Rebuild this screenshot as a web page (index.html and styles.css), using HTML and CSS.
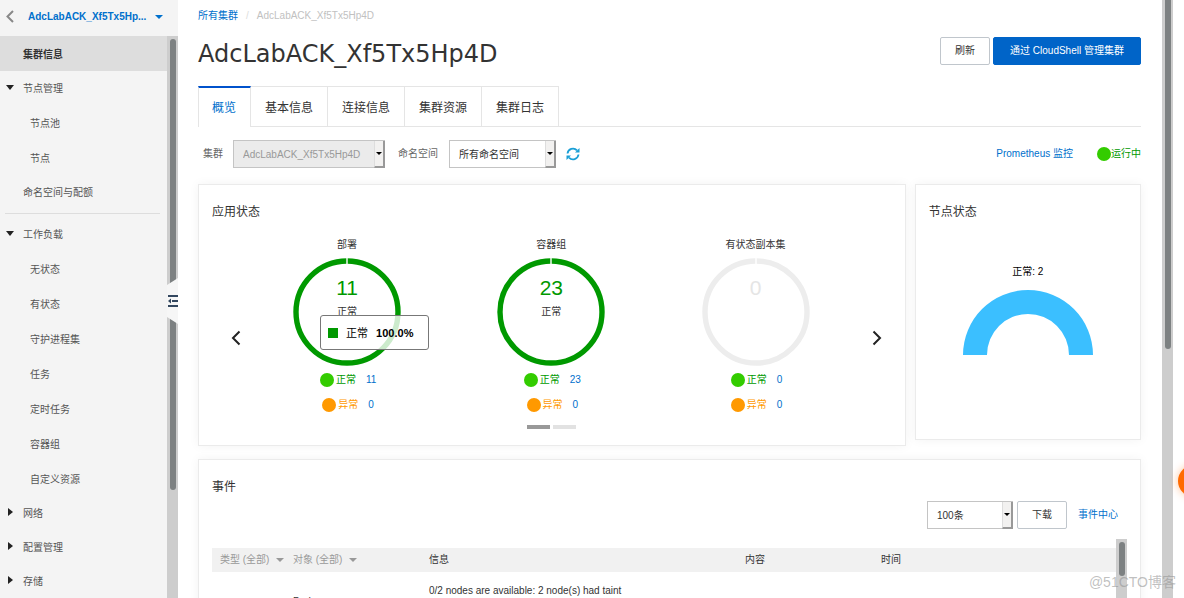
FILE: index.html
```html
<!DOCTYPE html>
<html lang="zh-CN">
<head>
<meta charset="utf-8">
<title>AdcLabACK_Xf5Tx5Hp4D</title>
<link rel="stylesheet" href="styles.css">
</head>
<body>
<div class="app">
  <aside class="sidebar">
    <div class="side-head">
      <button class="back" aria-label="返回"><svg width="8" height="13" viewBox="0 0 8 13"><path d="M7 1 1.500 6.500 7 12" fill="none" stroke="#888" stroke-width="2"/></svg></button>
      <button class="cluster-switch">AdcLabACK_Xf5Tx5Hp... <span class="caret"></span></button>
    </div>
    <div class="side-body">
      <nav class="menu">
        <a class="item active" href="#">集群信息</a>
        <a class="item" href="#"><span class="tri open"></span>节点管理</a>
        <a class="item child" href="#">节点池</a>
        <a class="item child" href="#">节点</a>
        <a class="item" href="#">命名空间与配额</a>
        <hr class="divider">
        <a class="item" href="#"><span class="tri open"></span>工作负载</a>
        <a class="item child" href="#">无状态</a>
        <a class="item child" href="#">有状态</a>
        <a class="item child" href="#">守护进程集</a>
        <a class="item child" href="#">任务</a>
        <a class="item child" href="#">定时任务</a>
        <a class="item child" href="#">容器组</a>
        <a class="item child" href="#">自定义资源</a>
        <a class="item" href="#"><span class="tri"></span>网络</a>
        <a class="item" href="#"><span class="tri"></span>配置管理</a>
        <a class="item" href="#"><span class="tri"></span>存储</a>
      </nav>
      <div class="track side-track"><div class="thumb side-thumb"></div></div>
    </div>
    <button class="collapse" aria-label="收起"><svg width="11" height="46" viewBox="0 0 11 46"><path d="M0 7 11 0V46L0 39Z" fill="#f6f6f6"/><path d="M1 18h10M5 23h6M1 28h10" stroke="#33475f" stroke-width="2"/><path d="M4 20.500v5L1 23z" fill="#33475f"/></svg></button>
  </aside>

  <main class="main">
    <nav class="crumbs"><a href="#">所有集群</a><span class="sep">/</span><span>AdcLabACK_Xf5Tx5Hp4D</span></nav>
    <header class="title-row">
      <h1>AdcLabACK_Xf5Tx5Hp4D</h1>
      <button class="btn">刷新</button>
      <button class="btn primary">通过 CloudShell 管理集群</button>
    </header>
    <div class="tabs" role="tablist">
      <button class="tab on" role="tab" aria-selected="true">概览</button>
      <button class="tab" role="tab">基本信息</button>
      <button class="tab" role="tab">连接信息</button>
      <button class="tab" role="tab">集群资源</button>
      <button class="tab" role="tab">集群日志</button>
    </div>
    <div class="filters">
      <label for="cluster">集群</label>
      <span class="select cluster"><select id="cluster" disabled><option>AdcLabACK_Xf5Tx5Hp4D</option></select><span class="drop"></span></span>
      <label for="ns">命名空间</label>
      <span class="select ns"><select id="ns"><option>所有命名空间</option></select><span class="drop"></span></span>
      <button class="reload" aria-label="刷新"><svg width="14" height="14" viewBox="0 0 14 14"><path d="M1.500 6.500A5.500 5.500 0 0 1 11 3.400M12.500 7.500A5.500 5.500 0 0 1 3 10.600" fill="none" stroke="#1a9fd6" stroke-width="1.800"/><path d="M13.500 1V5.500H9zM0.500 13V8.500H5z" fill="#1a9fd6"/></svg></button>
      <a class="prom" href="#">Prometheus 监控</a>
      <span class="running"><i class="dot ok"></i>运行中</span>
    </div>

    <div class="cards">
      <section class="card apps">
        <h2>应用状态</h2>
        <div class="carousel">
          <button class="arrow prev" aria-label="上一页"><svg width="10" height="16" viewBox="0 0 10 16"><path d="M8.500 1.500 2 8l6.500 6.500" fill="none" stroke="#222" stroke-width="2"/></svg></button>
          <div class="slides">
            <div class="slide">
              <h3>部署</h3>
              <div class="donut">
                <svg class="ring" viewBox="0 0 108 108"><circle cx="54" cy="54" r="51" fill="none" stroke="#090" stroke-width="5.400"/><path d="M54 0v7" stroke="#fff" stroke-width="1.400"/></svg>
                <div class="center"><strong>11</strong><span>正常</span></div>
                <div class="tip"><i class="sq"></i><span>正常</span><b>100.0%</b></div>
              </div>
              <div class="legend ok-text"><i class="dot ok"></i>正常<a href="#">11</a></div>
              <div class="legend bad-text"><i class="dot bad"></i>异常<a href="#">0</a></div>
            </div>
            <div class="slide">
              <h3>容器组</h3>
              <div class="donut">
                <svg class="ring" viewBox="0 0 108 108"><circle cx="54" cy="54" r="51" fill="none" stroke="#090" stroke-width="5.400"/><path d="M54 0v7" stroke="#fff" stroke-width="1.400"/></svg>
                <div class="center"><strong>23</strong><span>正常</span></div>
              </div>
              <div class="legend ok-text"><i class="dot ok"></i>正常<a href="#">23</a></div>
              <div class="legend bad-text"><i class="dot bad"></i>异常<a href="#">0</a></div>
            </div>
            <div class="slide">
              <h3>有状态副本集</h3>
              <div class="donut">
                <svg class="ring" viewBox="0 0 108 108"><circle cx="54" cy="54" r="51" fill="none" stroke="#ededed" stroke-width="5.400"/><path d="M54 0v7" stroke="#fff" stroke-width="1.400"/></svg>
                <div class="center none"><strong>0</strong></div>
              </div>
              <div class="legend ok-text"><i class="dot ok"></i>正常<a href="#">0</a></div>
              <div class="legend bad-text"><i class="dot bad"></i>异常<a href="#">0</a></div>
            </div>
          </div>
          <button class="arrow next" aria-label="下一页"><svg width="10" height="16" viewBox="0 0 10 16"><path d="M1.500 1.500 8 8l-6.500 6.500" fill="none" stroke="#222" stroke-width="2"/></svg></button>
        </div>
        <div class="pager"><i class="on"></i><i></i></div>
      </section>
      <section class="card nodes">
        <h2>节点状态</h2>
        <div class="half">
          <span>正常: 2</span>
          <svg width="130" height="65" viewBox="0 0 130 65"><path d="M0 65A65 65 0 0 1 130 65H106A41 41 0 0 0 24 65Z" fill="#3bbfff"/></svg>
        </div>
      </section>
    </div>

    <section class="card events">
      <h2>事件</h2>
      <div class="toolbar">
        <span class="select count"><select aria-label="条数"><option>100条</option></select><span class="drop"></span></span>
        <button class="btn">下载</button>
        <a href="#">事件中心</a>
      </div>
      <div class="table-wrap">
        <table>
          <thead><tr><th class="c-type">类型 (全部) <span class="caret"></span></th><th class="c-obj">对象 (全部) <span class="caret"></span></th><th class="c-info">信息</th><th class="c-body">内容</th><th>时间</th></tr></thead>
          <tbody><tr><td></td><td class="low">Pod</td><td>0/2 nodes are available: 2 node(s) had taint</td><td></td><td></td></tr></tbody>
        </table>
        <div class="track table-track"><div class="thumb table-thumb"></div></div>
      </div>
    </section>
  </main>
  <div class="track page-track"><div class="thumb page-thumb"></div></div>
  <div class="gutter"></div>
  <button class="float" aria-label="咨询"></button>
  <div class="watermark">@51CTO博客</div>
</div>
</body>
</html>
```
FILE: styles.css
```css
* { box-sizing: border-box; }
body, h1, h2, h3 { margin: 0; font-weight: normal; }
body, button, select {
  font-family: "Liberation Sans", "Noto Sans CJK SC", sans-serif;
  font-size: 10px;
  line-height: 16px;
  color: #333;
}
button { border: 0; padding: 0; background: none; }
svg { display: block; }
a { color: #0070cc; text-decoration: none; }

.app {
  position: relative;
  display: grid;
  grid-template-columns: 178px 1fr 11px 11px;
  height: 100vh;
  overflow: hidden;
  background: #fff;
}

.sidebar { position: relative; display: flex; flex-direction: column; background: #f4f4f4; min-height: 0; }
.side-head { display: flex; align-items: center; gap: 14px; height: 36px; flex: none; padding: 0 0 3px 6px; }
.cluster-switch { color: #0070cc; font-weight: bold; white-space: nowrap; display: flex; align-items: center; gap: 9px; }
.caret { display: inline-block; border: 4px solid transparent; border-top-color: currentColor; border-bottom: 0; vertical-align: 1px; }
.side-body { display: flex; flex: 1; min-height: 0; overflow: hidden; }
.menu { flex: 1; }
.item { position: relative; display: flex; align-items: center; height: 34px; padding: 2px 0 0 23px; color: #555; }
.item.child { height: 35px; padding-left: 30px; }
.item.active { height: 35px; background: #ddd; color: #333; font-weight: bold; }
.divider { height: 1px; margin: 4px 7px 3px 5px; border: 0; background: #ddd; }
.tri { position: absolute; left: 8px; top: 12px; border: 4px solid transparent; border-left: 5px solid #222; border-right: 0; }
.tri.open { left: 6px; top: 14px; border: 4px solid transparent; border-top: 5px solid #222; border-bottom: 0; }
.collapse { position: absolute; right: 0; top: 278px; }

.track { background: #cdcdcd; flex: none; }
.thumb { width: 6px; margin: 0 auto; border-radius: 3px; background: #7d8182; }
.side-track { width: 11px; padding-top: 3px; }
.side-thumb { height: 451px; }
.page-thumb { height: 349px; border-radius: 0 0 3px 3px; }
.table-track { width: 11px; padding-top: 3px; }
.table-thumb { height: 34px; }

.main { min-width: 0; padding: 8px 21px 0 20px; }
.crumbs { display: flex; gap: 8px; color: #c1c1c1; height: 16px; }
.sep { color: #ddd; }
.title-row { display: flex; align-items: flex-start; gap: 3px; height: 34px; margin-top: 13px; }
h1 { flex: 1; font-family: "DejaVu Sans", sans-serif; font-size: 24px; line-height: 34px; }
.btn { height: 28px; padding: 0 13px; border: 1px solid #c0c6cc; border-radius: 2px; background: #fff; min-width: 50px; }
.btn.primary { border-color: #0064c8; background: #0064c8; color: #fff; padding: 0 15px; min-width: 148px; }

.tabs { display: flex; height: 41px; margin-top: 15px; border-bottom: 1px solid #e5e5e5; }
.tab { height: 40px; padding: 2px 14px 0; border: solid #e5e5e5; border-width: 1px 1px 0 0; font-size: 12px; }
.tab.on { height: 41px; padding: 1px 14px 0 13px; border-top: 2px solid #0052cc; border-left: 1px solid #e5e5e5; background: #fff; color: #0070cc; }

.filters { display: flex; align-items: center; height: 28px; margin-top: 13px; padding-left: 5px; color: #666; }
.select { position: relative; display: inline-flex; height: 28px; }
.select select { appearance: none; width: 100%; padding: 1px 9px 0; border: 1px solid #c4c4c4; border-radius: 0; background: #fff; }
.select select:disabled { background: #ebebeb; color: #999; opacity: 1; }
.drop { position: absolute; top: 1px; right: 0; bottom: 0; width: 11px; border: solid #999; border-width: 0 2px 2px 0; border-left: 1px solid #ddd; background: #f2f1f0; pointer-events: none; }
.drop::after { content: ""; position: absolute; left: 1px; top: 11px; border: 3px solid transparent; border-top-color: #000; border-bottom: 0; }
.cluster { width: 152px; margin: 0 13px 0 10px; }
.ns { width: 107px; margin: 0 10px 0 11px; }
.prom { margin-left: auto; }
.running { display: flex; align-items: center; margin-left: 24px; color: #090; }
.dot { width: 14px; height: 14px; border-radius: 50%; }
.dot.ok { background: #3c0; }
.dot.bad { background: #f90; }

.cards { display: grid; grid-template-columns: 1fr 24%; gap: 9px; align-items: start; margin-top: 16px; }
.card { border: 1px solid #ebebeb; background: #fff; box-shadow: 0 0 10px rgba(0, 0, 0, 0.05); }
h2 { padding: 17px 13px 0; font-size: 12px; line-height: 20px; }
.carousel { display: flex; margin-top: 15px; }
.arrow { width: 18px; height: 16px; display: flex; justify-content: center; margin-top: 93px; flex: none; }
.arrow.prev { margin-left: 28px; }
.arrow.next { margin-left: 10px; margin-right: 19px; }
.slides { flex: 1; display: grid; grid-template-columns: repeat(3, 1fr); }
.slide { display: flex; flex-direction: column; align-items: center; }
h3 { font-size: 10px; line-height: 16px; }
.donut { position: relative; width: 108px; height: 108px; margin: 5px 0 6px; }
.ring { width: 100%; height: 100%; }
.center { position: absolute; inset: 18px 0 0; display: flex; flex-direction: column; align-items: center; }
.center strong { font-weight: normal; font-size: 21px; line-height: 24px; color: #090; }
.center span { margin-top: 4px; }
.center.none strong { color: #e5e5e5; }
.tip { position: absolute; left: 27px; top: 57px; display: flex; align-items: center; gap: 8px; width: 109px; height: 35px; padding: 0 7px; border: 1px solid #777; border-radius: 3px; background: rgba(255, 255, 255, 0.8); color: #000; font-size: 11px; white-space: nowrap; z-index: 1; }
.sq { width: 10px; height: 10px; background: #090; }
.legend { display: flex; align-items: center; gap: 2px; height: 16px; margin-bottom: 9px; padding-left: 2px; }
.legend a { margin-left: 8px; }
.ok-text { color: #090; }
.bad-text { color: #f90; }
.pager { display: flex; justify-content: center; gap: 3px; padding: 3px 0 16px; }
.pager i { width: 23px; height: 4px; background: #e2e2e2; }
.pager i.on { background: #999; }

.half { display: flex; flex-direction: column; align-items: center; gap: 10px; padding: 42px 0 84px; color: #000; }

.events { margin-top: 13px; padding-right: 13px; }
.toolbar { display: flex; justify-content: flex-end; align-items: center; gap: 4px; margin-top: 4px; padding-right: 9px; }
.toolbar a { margin-left: 7px; }
.count { width: 86px; }
.table-wrap { display: flex; height: 200px; margin: 10px 0 0 13px; }
table { flex: 1; border-collapse: collapse; table-layout: fixed; margin-top: 9px; height: 0; }
th { height: 24px; padding: 0 0 0 8px; background: #f1f1f1; text-align: left; font-weight: normal; white-space: nowrap; }
th .caret { margin-left: 4px; }
td { padding: 11px 0 0 8px; vertical-align: top; white-space: nowrap; }
td.low { padding-top: 22px; }
.c-type { width: 73px; color: #999; }
.c-obj { width: 136px; color: #999; }
.c-info { width: 316px; }
.c-body { width: 136px; }

.float { position: absolute; left: calc(100% - 6px); top: 465px; width: 32px; height: 32px; border-radius: 50%; background: #ff6a00; box-shadow: 0 0 8px rgba(255, 106, 0, 0.4); }
.watermark { position: absolute; right: 8px; bottom: 6px; font-size: 14px; line-height: 20px; color: rgba(150, 150, 150, 0.6); }
```
